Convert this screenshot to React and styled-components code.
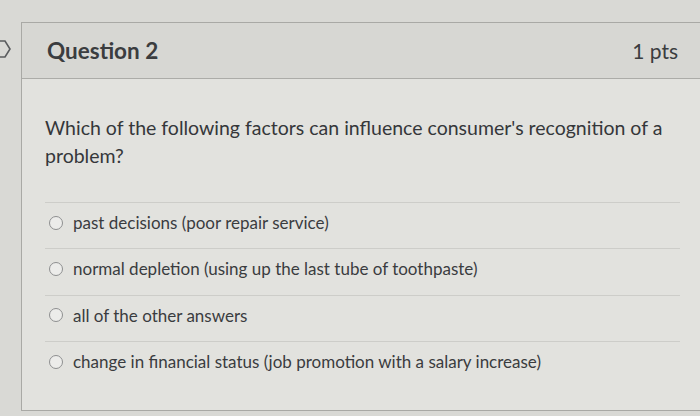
import styled, { createGlobalStyle } from "styled-components";

const GlobalStyle = createGlobalStyle`
  html, body {
    margin: 0;
    padding: 0;
    background: #d9d9d5;
    font-family: Lato, "Liberation Sans", sans-serif;
    overflow: hidden;
  }
`

const Page = styled.div`
  position: relative;
  width: 700px;
  height: 416px;
  padding: 22px 0 0 21px;
  box-sizing: border-box;
`
const SideIcon = styled.svg`
  position: absolute;
  left: -8px;
  top: 39px;
`
const Card = styled.div`
  border: 1px solid #a9a9a5;
  border-right: none;
  background: #e2e2de;
  height: 389px;
  box-sizing: border-box;
  display: flex;
  flex-direction: column;
`
const Header = styled.div`
  height: 56px;
  box-sizing: border-box;
  background: #d7d7d3;
  border-bottom: 1px solid #acaca8;
  display: flex;
  align-items: center;
  justify-content: space-between;
  padding: 0 22px 0 25px;
`
const Title = styled.h2`
  margin: 0;
  font-size: 22.5px;
  font-weight: 700;
  color: #3b3d3f;
`
const Points = styled.span`
  font-size: 21px;
  font-weight: 400;
  color: #3b3d3f;
`
const Body = styled.div`
  padding: 35px 20px 0 23px;
`
const Prompt = styled.p`
  margin: 0;
  font-size: 19.5px;
  line-height: 28px;
  color: #35373a;
`
const Answers = styled.div`
  margin-top: 32px;
`
const Answer = styled.label`
  display: flex;
  align-items: center;
  gap: 10px;
  height: 46.3px;
  box-sizing: border-box;
  border-top: 1px solid #cdcdc9;
  padding: 0 0 6px 4px;
  font-size: 17px;
  color: #3a3c3f;
`
const Radio = styled.span`
  width: 12px;
  height: 12px;
  border-radius: 50%;
  border: 1.5px solid #8e8f90;
  background: #ececea;
  flex-shrink: 0;
`

const answers = [
  "past decisions (poor repair service)",
  "normal depletion (using up the last tube of toothpaste)",
  "all of the other answers",
  "change in financial status (job promotion with a salary increase)",
]

export default function App() {
  return (
    <Page>
      <GlobalStyle />
      <SideIcon width="20" height="20" viewBox="0 0 20 20">
        <path d="M5 2 L13 2 L18 10 L13 18 L5 18" fill="none" stroke="#5a5c5e" strokeWidth="1.6" />
      </SideIcon>
      <Card>
        <Header>
          <Title>Question 2</Title>
          <Points>1 pts</Points>
        </Header>
        <Body>
          <Prompt>
            Which of the following factors can influence consumer's recognition of a problem?
          </Prompt>
          <Answers>
            {answers.map((text) => (
              <Answer key={text}>
                <Radio />
                {text}
              </Answer>
            ))}
          </Answers>
        </Body>
      </Card>
    </Page>
  )
}
